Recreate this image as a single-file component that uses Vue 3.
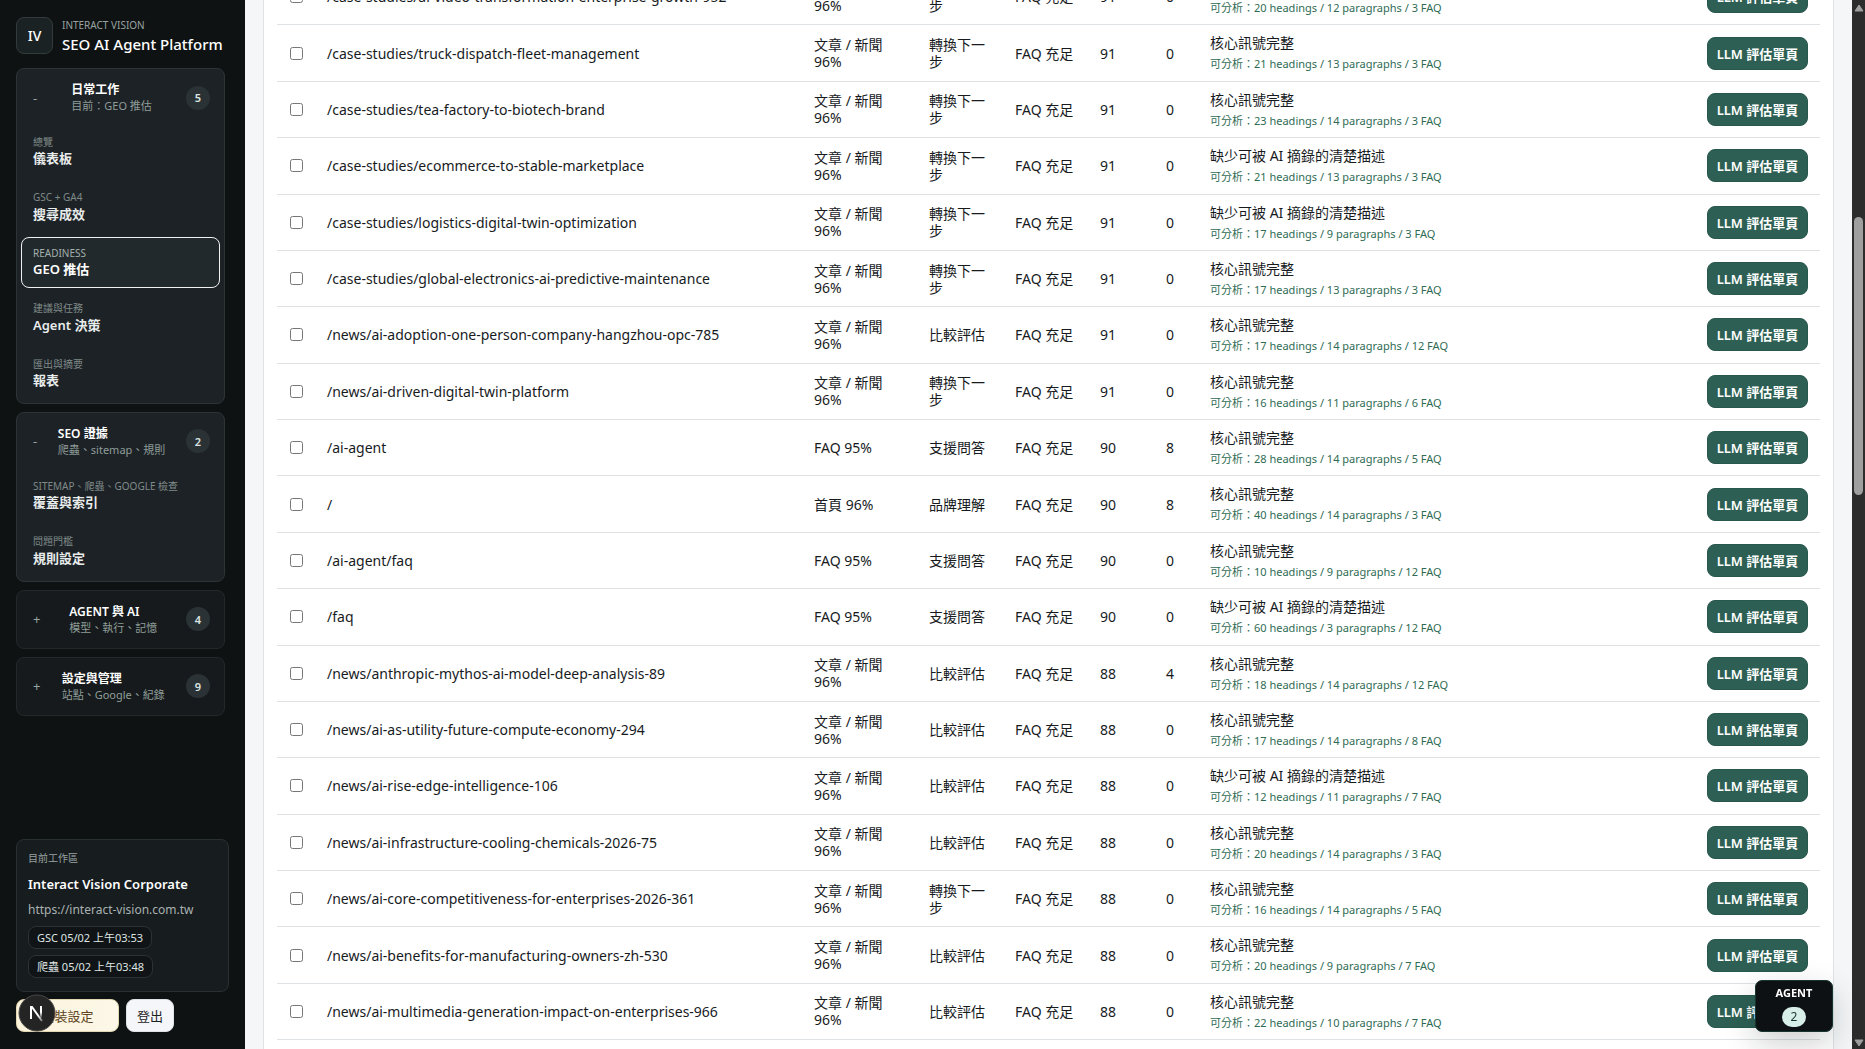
<script setup>
import { ref } from 'vue'

const groups = [
  {
    title: '日常工作', note: '目前：GEO 推估', count: 5, open: true,
    items: [
      { label: '總覽', name: '儀表板' },
      { label: 'GSC + GA4', name: '搜尋成效' },
      { label: 'READINESS', name: 'GEO 推估', active: true },
      { label: '建議與任務', name: 'Agent 決策' },
      { label: '匯出與摘要', name: '報表' }
    ]
  },
  {
    title: 'SEO 證據', note: '爬蟲、sitemap、規則', count: 2, open: true,
    items: [
      { label: 'SITEMAP、爬蟲、GOOGLE 檢查', name: '覆蓋與索引' },
      { label: '問題門檻', name: '規則設定' }
    ]
  },
  { title: 'AGENT 與 AI', note: '模型、執行、記憶', count: 4, open: false, items: [] },
  { title: '設定與管理', note: '站點、Google、紀錄', count: 9, open: false, items: [] }
]

const article = '文章 / 新聞 96%'
const next = '轉換下一步'
const compare = '比較評估'
const support = '支援問答'
const whole = '核心訊號完整'
const missing = '缺少可被 AI 摘錄的清楚描述'

const rows = [
  ['/case-studies/ai-video-transformation-enterprise-growth-952', article, next, 91, 0, whole, 20, 12, 3],
  ['/case-studies/truck-dispatch-fleet-management', article, next, 91, 0, whole, 21, 13, 3],
  ['/case-studies/tea-factory-to-biotech-brand', article, next, 91, 0, whole, 23, 14, 3],
  ['/case-studies/ecommerce-to-stable-marketplace', article, next, 91, 0, missing, 21, 13, 3],
  ['/case-studies/logistics-digital-twin-optimization', article, next, 91, 0, missing, 17, 9, 3],
  ['/case-studies/global-electronics-ai-predictive-maintenance', article, next, 91, 0, whole, 17, 13, 3],
  ['/news/ai-adoption-one-person-company-hangzhou-opc-785', article, compare, 91, 0, whole, 17, 14, 12],
  ['/news/ai-driven-digital-twin-platform', article, next, 91, 0, whole, 16, 11, 6],
  ['/ai-agent', 'FAQ 95%', support, 90, 8, whole, 28, 14, 5],
  ['/', '首頁 96%', '品牌理解', 90, 8, whole, 40, 14, 3],
  ['/ai-agent/faq', 'FAQ 95%', support, 90, 0, whole, 10, 9, 12],
  ['/faq', 'FAQ 95%', support, 90, 0, missing, 60, 3, 12],
  ['/news/anthropic-mythos-ai-model-deep-analysis-89', article, compare, 88, 4, whole, 18, 14, 12],
  ['/news/ai-as-utility-future-compute-economy-294', article, compare, 88, 0, whole, 17, 14, 8],
  ['/news/ai-rise-edge-intelligence-106', article, compare, 88, 0, missing, 12, 11, 7],
  ['/news/ai-infrastructure-cooling-chemicals-2026-75', article, compare, 88, 0, whole, 20, 14, 3],
  ['/news/ai-core-competitiveness-for-enterprises-2026-361', article, next, 88, 0, whole, 16, 14, 5],
  ['/news/ai-benefits-for-manufacturing-owners-zh-530', article, compare, 88, 0, whole, 20, 9, 7],
  ['/news/ai-multimedia-generation-impact-on-enterprises-966', article, compare, 88, 0, whole, 22, 10, 7]
].map(([path, type, intent, score, issues, reason, headings, paragraphs, faq]) => ({
  path, type, intent, score, issues, reason, headings, paragraphs, faq
}))

const selected = ref([])
</script>

<template>
  <div class="shell" lang="zh-TW">
    <aside class="sidebar">
      <header class="brand">
        <span class="logo">IV</span>
        <div>
          <p class="brand-owner">INTERACT VISION</p>
          <h1 class="brand-name">SEO AI Agent Platform</h1>
        </div>
      </header>

      <nav class="groups">
        <section v-for="g in groups" :key="g.title" class="group" :class="{ open: g.open }">
          <button type="button" class="group-head" :aria-expanded="g.open">
            <span class="sign">{{ g.open ? '-' : '+' }}</span>
            <span class="group-text">
              <strong>{{ g.title }}</strong>
              <small>{{ g.note }}</small>
            </span>
            <span class="count">{{ g.count }}</span>
          </button>
          <div v-if="g.open" class="group-body">
            <a v-for="i in g.items" :key="i.name" href="#" class="item" :class="{ active: i.active }">
              <span class="item-label">{{ i.label }}</span>
              <span class="item-name">{{ i.name }}</span>
            </a>
          </div>
        </section>
      </nav>

      <footer class="foot">
        <section class="workspace">
          <p class="ws-label">目前工作區</p>
          <h2 class="ws-name">Interact Vision Corporate</h2>
          <p class="ws-url">https://interact-vision.com.tw</p>
          <div class="pills">
            <span class="pill">GSC 05/02 上午03:53</span>
            <span class="pill">爬蟲 05/02 上午03:48</span>
          </div>
        </section>
        <div class="actions">
          <button type="button" class="action setup">安裝設定</button>
          <button type="button" class="action">登出</button>
        </div>
      </footer>
    </aside>

    <main class="main">
      <section class="panel">
        <table class="pages">
          <colgroup>
            <col class="c-check"><col class="c-path"><col class="c-type"><col class="c-intent">
            <col class="c-faq"><col class="c-score"><col class="c-issues"><col><col class="c-action">
          </colgroup>
          <tbody>
            <tr v-for="r in rows" :key="r.path">
              <td class="check"><input v-model="selected" type="checkbox" :value="r.path" :aria-label="r.path"></td>
              <td class="path">{{ r.path }}</td>
              <td>{{ r.type }}</td>
              <td>{{ r.intent }}</td>
              <td class="faq">FAQ 充足</td>
              <td>{{ r.score }}</td>
              <td>{{ r.issues }}</td>
              <td>
                <div class="reason-title">{{ r.reason }}</div>
                <div class="reason-note">可分析：{{ r.headings }} headings / {{ r.paragraphs }} paragraphs / {{ r.faq }} FAQ</div>
              </td>
              <td><button type="button" class="evaluate">LLM 評估單頁</button></td>
            </tr>
          </tbody>
        </table>
      </section>
    </main>

    <div class="scrollbar" aria-hidden="true">
      <svg width="10" height="8" viewBox="0 0 10 8"><path d="M5 1 L9 7 H1 Z" fill="#9f9f9f" stroke="#9f9f9f" stroke-linejoin="round" /></svg>
      <div class="track"><div class="thumb"></div></div>
      <svg width="10" height="8" viewBox="0 0 10 8"><path d="M5 7 L9 1 H1 Z" fill="#9f9f9f" stroke="#9f9f9f" stroke-linejoin="round" /></svg>
    </div>

    <button type="button" class="dev-badge" aria-label="Next.js">
      <svg width="38" height="38" viewBox="0 0 38 38">
        <defs>
          <linearGradient id="stem" x1="0" y1="0" x2="0" y2="1"><stop offset="0.5" stop-color="#fff" /><stop offset="1" stop-color="#fff" stop-opacity="0.1" /></linearGradient>
          <linearGradient id="slash" x1="0" y1="0" x2="1" y2="1"><stop offset="0.6" stop-color="#fff" /><stop offset="1" stop-color="#fff" stop-opacity="0.4" /></linearGradient>
        </defs>
        <circle cx="19" cy="19" r="18" fill="#242424" stroke="#484848" stroke-width="1" />
        <path d="M13 25 V13 H14 L24 27" fill="none" stroke="url(#slash)" stroke-width="2" />
        <rect x="22" y="12" width="2" height="12" fill="url(#stem)" />
      </svg>
    </button>

    <button type="button" class="agent">
      <strong>AGENT</strong>
      <span>2</span>
    </button>
  </div>
</template>

<style>
body {
  margin: 0;
  overflow: hidden;
}
</style>

<style scoped>
.shell {
  display: flex;
  height: 100vh;
  overflow: hidden;
  background: #f4f6f8;
  color: #171b1e;
  font-family: "Noto Sans", "Noto Sans CJK TC", sans-serif;
  font-size: 14px;
}
.shell * { box-sizing: border-box; }
p, h1, h2 { margin: 0; }
button { font-family: inherit; cursor: pointer; }

.sidebar {
  display: flex;
  flex: none;
  flex-direction: column;
  width: 245px;
  padding: 16px 16px 17px;
  background: #0f1213;
  color: #fff;
}
.brand {
  display: flex;
  align-items: center;
  gap: 9px;
  height: 39px;
}
.logo {
  display: grid;
  place-items: center;
  width: 37px;
  height: 37px;
  border: 1px solid #333b3c;
  border-radius: 8px;
  background: #1b2223;
  font-size: 14px;
  font-weight: 500;
}
.brand-owner {
  color: #98a3a1;
  font-size: 10px;
  line-height: 16px;
}
.brand-name {
  font-size: 15px;
  font-weight: 500;
  line-height: 22px;
  white-space: nowrap;
}
.groups {
  display: flex;
  flex-direction: column;
  gap: 8px;
  padding: 13px 4px 0 0;
}
.group {
  border: 1px solid #23292b;
  border-radius: 8px;
  background: #161a1d;
}
.group.open {
  border-color: #2d3436;
  background: #1d2227;
}
.group-head {
  display: flex;
  align-items: center;
  justify-content: space-between;
  width: 100%;
  height: 57px;
  padding: 0 14px 0 16px;
  border: 0;
  background: none;
  color: #fff;
  text-align: left;
}
.sign { color: #98a6a2; font-size: 13px; }
.group-text {
  display: flex;
  flex-direction: column;
  padding-top: 1px;
}
.group-text strong {
  font-size: 12px;
  font-weight: 600;
  line-height: 16px;
}
.group-text small {
  color: #8e9d98;
  font-size: 11px;
  line-height: 16px;
}
.count {
  display: grid;
  place-items: center;
  width: 24px;
  height: 24px;
  border-radius: 50%;
  background: #2b3236;
  color: #dbe4e1;
  font-size: 11px;
  font-weight: 600;
}
.group-body {
  display: flex;
  flex-direction: column;
  gap: 4px;
  padding: 0 4px 4px;
}
.item {
  display: flex;
  flex-direction: column;
  padding: 8px 11px 9px;
  border: 1px solid transparent;
  border-radius: 8px;
  color: #e8eceb;
  text-decoration: none;
}
.item.active {
  border-color: #eef1f0;
  background: #22292c;
  color: #fff;
}
.item-label {
  color: #7f8a88;
  font-size: 10px;
  line-height: 1.44;
  white-space: nowrap;
}
.active .item-label { color: #a3b0ad; }
.item-name {
  font-size: 13px;
  font-weight: 600;
  line-height: 18px;
}

.foot {
  display: flex;
  flex-direction: column;
  gap: 7px;
  margin-top: auto;
}
.workspace {
  padding: 9px 11px 13px;
  border: 1px solid #293032;
  border-radius: 8px;
  background: #171c1f;
}
.ws-label {
  color: #98a3a1;
  font-size: 10px;
  line-height: 18px;
}
.ws-name {
  margin-top: 5px;
  font-size: 13px;
  font-weight: 600;
  line-height: 24px;
  white-space: nowrap;
}
.ws-url {
  margin-top: 5px;
  color: #a9b2b1;
  font-size: 12px;
  line-height: 18px;
}
.pills {
  display: flex;
  flex-direction: column;
  align-items: flex-start;
  gap: 6px;
  margin-top: 7px;
}
.pill {
  height: 23px;
  padding: 0 8px;
  border: 1px solid #2c3335;
  border-radius: 8px;
  background: #101416;
  color: #dfe5e3;
  font-size: 11px;
  line-height: 21px;
  white-space: nowrap;
}
.actions { display: flex; gap: 7px; }
.action {
  height: 33px;
  padding: 0 10px;
  border: 1px solid #dfe2e6;
  border-radius: 8px;
  background: #f5f6f9;
  color: #1c2124;
  font-size: 13px;
}
.action.setup {
  width: 103px;
  border-color: #e3d6b3;
  background: linear-gradient(90deg, #fcf3dc, #fcf7e8);
  color: #5e4422;
}

.main {
  flex: 1;
  min-width: 0;
  padding: 0 18px;
  overflow: hidden;
}
.panel {
  min-height: 110vh;
  margin-top: -32px;
  padding: 0 13px;
  border: 1px solid #dfe3e6;
  background: #fff;
}
.pages {
  width: 100%;
  border-collapse: separate;
  border-spacing: 0;
  table-layout: fixed;
}
.c-check { width: 38px; }
.c-path { width: 487px; }
.c-type { width: 115px; }
.c-intent { width: 86px; }
.c-faq { width: 85px; }
.c-score { width: 66px; }
.c-issues { width: 44px; }
.c-action { width: 125px; }
td {
  padding: 8px 12px;
  border-bottom: 1px solid #dfe2e4;
  font-size: 14px;
  line-height: 17px;
  vertical-align: middle;
}
td.check { padding-right: 0; }
.check input {
  display: block;
  width: 13px;
  height: 13px;
  margin: 0 0 0 1px;
}
.path, .faq { white-space: nowrap; }
.reason-title { line-height: 19px; }
.reason-note {
  margin-top: 3px;
  color: #2f6b54;
  font-size: 11px;
  line-height: 1.58;
}
.evaluate {
  width: 101px;
  height: 33px;
  padding: 0;
  border: 1px solid #28574c;
  border-radius: 8px;
  background: #2d5f54;
  color: #fff;
  font-size: 13px;
  font-weight: 600;
  white-space: nowrap;
}

.scrollbar {
  display: flex;
  flex: none;
  flex-direction: column;
  align-items: center;
  justify-content: space-between;
  width: 13px;
  padding: 4px 0 2px;
  background: #2c2c2c;
}
.track {
  flex: 1;
  padding-top: 205px;
}
.thumb {
  width: 9px;
  height: 278px;
  border-radius: 5px;
  background: #9f9f9f;
}

.dev-badge {
  position: fixed;
  bottom: 17px;
  left: 18px;
  width: 38px;
  height: 38px;
  padding: 0;
  border: 0;
  border-radius: 50%;
  background: none;
}
.dev-badge svg { display: block; }
.agent {
  display: flex;
  position: fixed;
  right: 32px;
  bottom: 17px;
  flex-direction: column;
  align-items: center;
  gap: 6px;
  width: 78px;
  height: 52px;
  padding: 4px 0 0;
  border: 1px solid #17352f;
  border-radius: 7px;
  background: #0e1113;
  box-shadow: 0 12px 32px rgba(15, 18, 19, 0.2);
  color: #fff;
}
.agent strong {
  font-size: 11px;
  font-weight: 700;
  line-height: 16px;
}
.agent span {
  width: 24px;
  border-radius: 10px;
  background: #d8efe9;
  color: #17352f;
  font-size: 12px;
  line-height: 20px;
}
</style>
